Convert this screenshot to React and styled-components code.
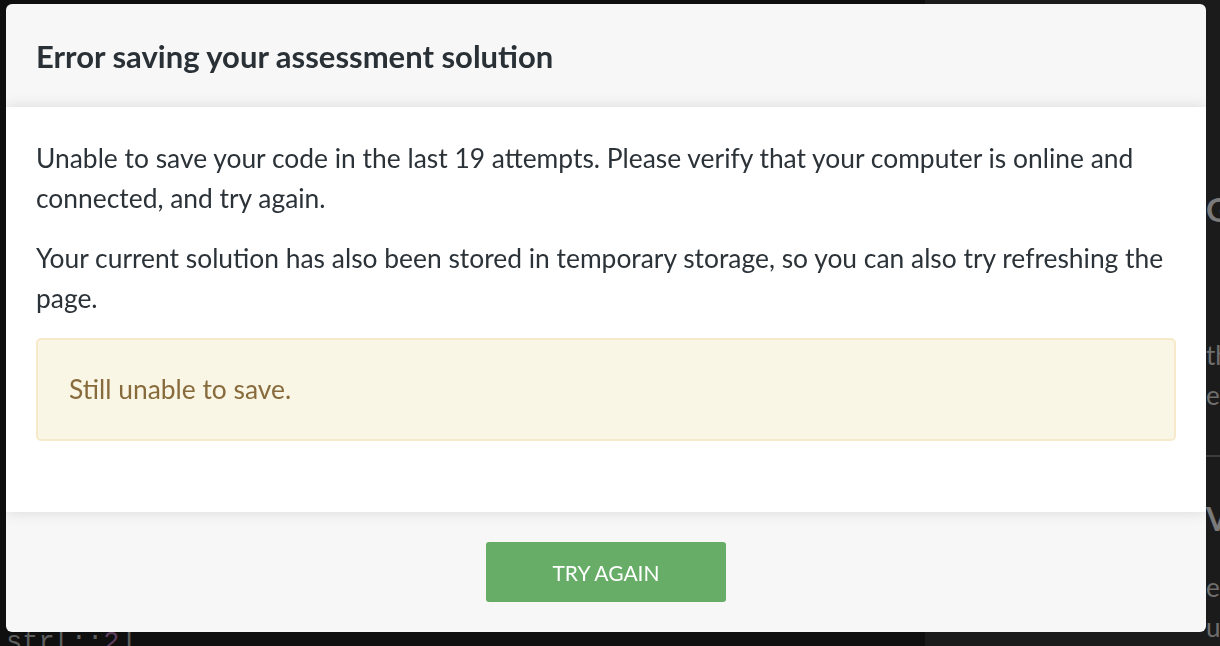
import React from 'react';
import styled, { createGlobalStyle } from 'styled-components';

const GlobalStyle = createGlobalStyle`
  html, body {
    margin: 0;
    padding: 0;
    background: #0f0f0f;
    overflow: hidden;
  }
  * {
    box-sizing: border-box;
  }
`;

const StPage = styled.div`
  display: flex;
  width: 100vw;
  height: 100vh;
  overflow: hidden;
`;

const StEditorPane = styled.div`
  flex: 0 0 925px;
  background: #0f0f0f;
  padding: 0 6px;
  display: flex;
  flex-direction: column;
  justify-content: flex-end;
  font-family: 'Liberation Mono', monospace;
  font-size: 27px;
  line-height: 38px;
  color: #5e5e5e;
`;

const StCodeLine = styled.div`
  white-space: pre;
  margin-bottom: -16px;
`;

const StSlice = styled.span`
  color: #5c3d5c;
`;

const StInfoPane = styled.div`
  flex: 1;
  min-width: 0;
  overflow: hidden;
  background: #1b1b1b;
  padding: 190px 0 0 281px;
  font-family: Lato, 'Noto Sans', sans-serif;
  color: #6e6e6e;
  white-space: nowrap;
`;

const StInfoHeading = styled.h2`
  margin: 0 0 ${({ gap }) => gap}px;
  font-size: 32px;
  line-height: 40px;
  font-weight: 700;
  color: #7a7a7a;
`;

const StInfoText = styled.p`
  margin: 0;
  font-size: 26px;
  line-height: 40px;
`;

const StRule = styled.hr`
  border: 0;
  border-top: 2px solid #3c3c3c;
  margin: 40px 0 42px -20px;
`;

const StBackdrop = styled.div`
  position: fixed;
  inset: 0;
  padding: 4px 14px 14px 6px;
`;

const StModal = styled.div`
  width: 1200px;
  border-radius: 6px;
  overflow: hidden;
  display: flex;
  flex-direction: column;
  font-family: 'Source Sans Pro', Lato, 'Noto Sans', sans-serif;
`;

const StHeader = styled.div`
  height: 103px;
  background: #f7f7f7;
  padding: 0 30px;
  display: flex;
  align-items: center;
`;

const StTitle = styled.h1`
  margin: 0;
  font-size: 31px;
  font-weight: 700;
  color: #2a3136;
`;

const StBody = styled.div`
  position: relative;
  z-index: 1;
  background: #fff;
  padding: 31px 30px 71px;
  box-shadow: 0 0 14px rgba(0, 0, 0, 0.12);
`;

const StText = styled.p`
  margin: 0 0 20px;
  font-size: 26.4px;
  line-height: 40px;
  color: #2b3238;
`;

const StAlert = styled.div`
  border: 2px solid #f7eacb;
  border-radius: 5px;
  background: #faf6e5;
  padding: 29px 31px 30px;
  font-size: 26.4px;
  line-height: 40px;
  color: #876b3d;
`;

const StFooter = styled.div`
  background: #f7f7f7;
  padding: 30px;
  display: flex;
  justify-content: center;
`;

const StButton = styled.button`
  width: 240px;
  height: 60px;
  border: 0;
  border-radius: 3px;
  background: #67ad67;
  color: #fff;
  font-family: inherit;
  font-size: 21px;
  cursor: pointer;
`;

const App = () => {
  return (
    <>
      <GlobalStyle />
      <StPage>
        <StEditorPane>
          <StCodeLine>
            str[::<StSlice>2</StSlice>]
          </StCodeLine>
        </StEditorPane>
        <StInfoPane>
          <StInfoHeading gap={105}>Goal</StInfoHeading>
          <StInfoText>the string</StInfoText>
          <StInfoText>every other</StInfoText>
          <StRule />
          <StInfoHeading gap={28}>Vowels</StInfoHeading>
          <StInfoText>errors</StInfoText>
          <StInfoText>use</StInfoText>
        </StInfoPane>
      </StPage>
      <StBackdrop>
        <StModal>
          <StHeader>
            <StTitle>Error saving your assessment solution</StTitle>
          </StHeader>
          <StBody>
            <StText>
              Unable to save your code in the last 19 attempts. Please verify
              that your computer is online and connected, and try again.
            </StText>
            <StText>
              Your current solution has also been stored in temporary storage,
              so you can also try refreshing the page.
            </StText>
            <StAlert>Still unable to save.</StAlert>
          </StBody>
          <StFooter>
            <StButton type="button">TRY AGAIN</StButton>
          </StFooter>
        </StModal>
      </StBackdrop>
    </>
  );
};

export default App;
